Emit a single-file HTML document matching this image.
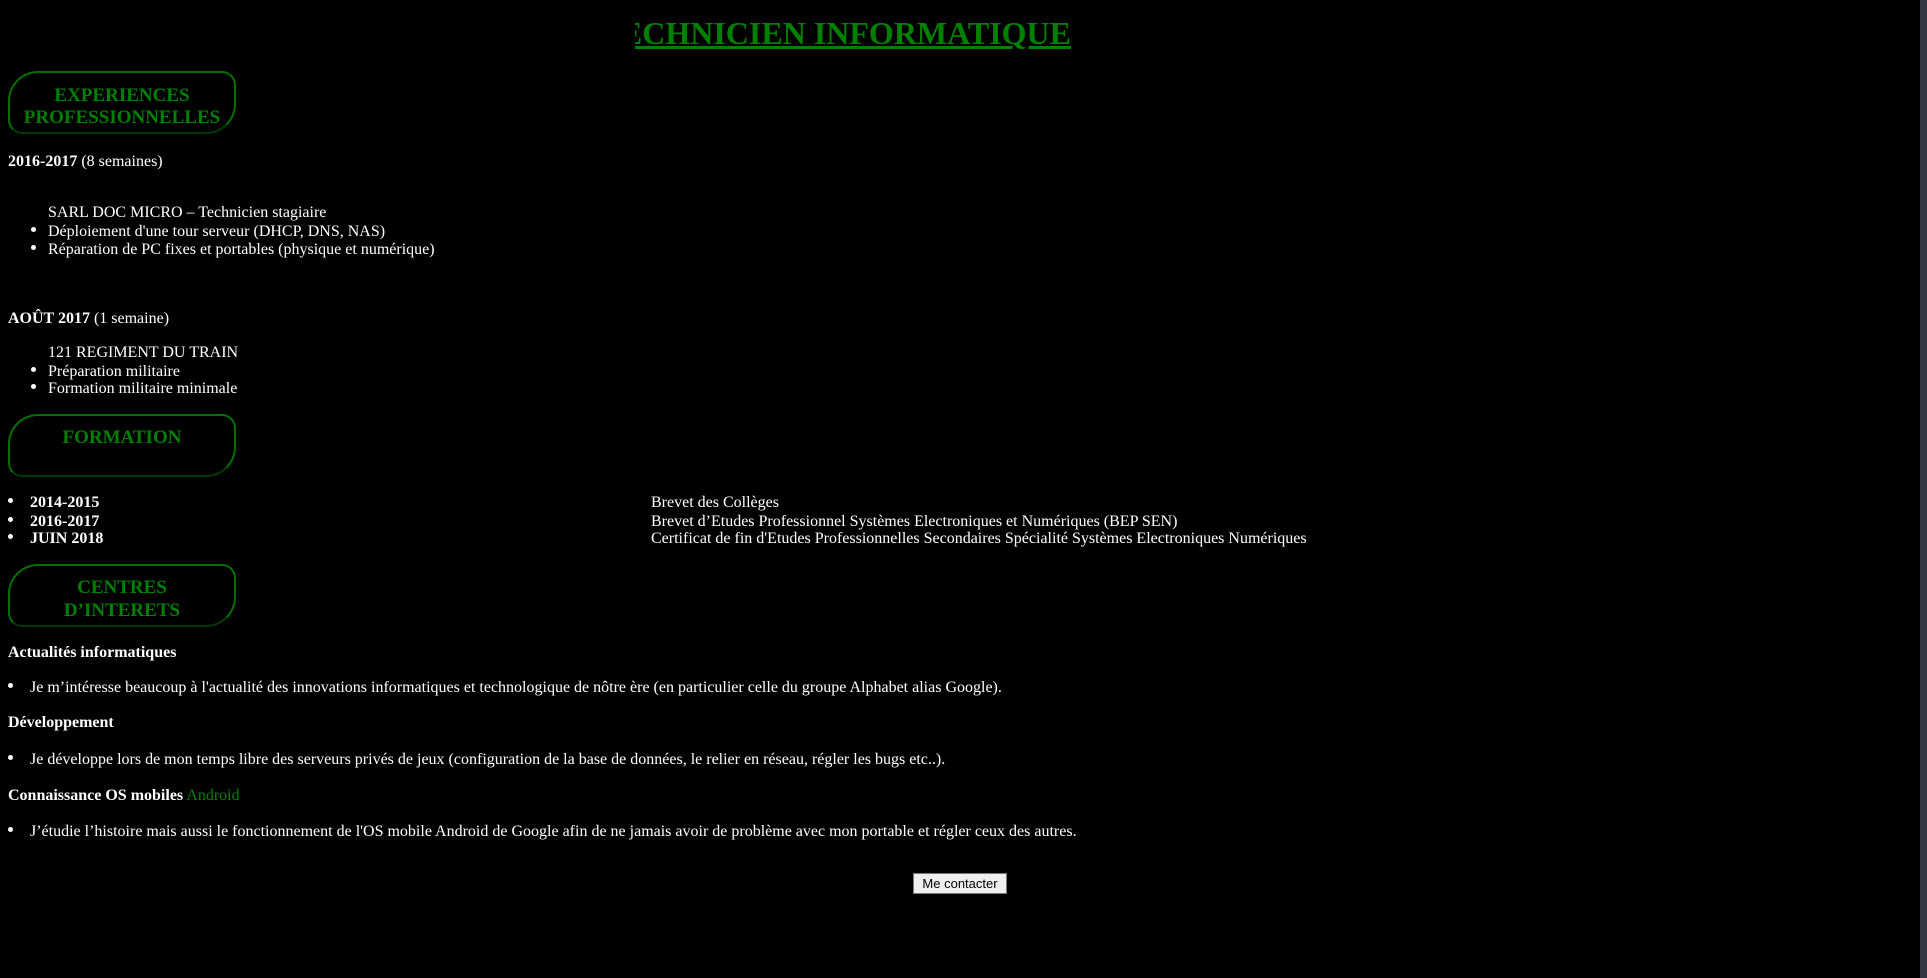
<!DOCTYPE html>
<html><head><meta charset="utf-8"><style>
body{margin:0;background:#000;width:1927px;height:978px;overflow:hidden;position:relative;font-family:"Liberation Serif",serif;font-size:16px;color:#fff}
.a{position:absolute;white-space:nowrap;line-height:18px;margin-top:2px}
.t{position:absolute;left:635px;top:12px;width:436px;overflow:hidden;height:44px}
.t span{position:absolute;right:0;top:0;font-size:32px;font-weight:bold;color:#008000;text-decoration:underline;white-space:nowrap;line-height:42px}
.box{position:absolute;left:8px;width:228px;border:2px solid #007000;border-bottom-color:#003a00;border-radius:30px 14px 30px 14px;color:#008000;font-weight:bold;font-size:19px;text-align:center;line-height:23px;box-sizing:border-box;height:63px}
.d{position:absolute;width:5px;height:5px;border-radius:50%;background:#fff;margin-top:1px}
b{font-weight:bold}
.sb{position:absolute;left:1920px;top:0;width:7px;height:978px;background:#34353e}
.btn{position:absolute;left:913px;top:873px;width:92px;height:19px;background:#efefef;border:1px solid #767676;color:#000;font-family:"Liberation Sans",sans-serif;font-size:13px;text-align:center;line-height:19px}
</style></head><body>
<div class="t"><span>TECHNICIEN INFORMATIQUE</span></div>
<div class="box" style="top:71px;padding-top:12px;line-height:22px">EXPERIENCES<br>PROFESSIONNELLES</div>
<div class="a" style="left:8px;top:151px"><b>2016-2017</b> (8 semaines)</div>
<div class="a" style="left:48px;top:202px">SARL DOC MICRO – Technicien stagiaire</div>
<div class="d" style="left:31px;top:226px"></div><div class="a" style="left:48px;top:221px">Déploiement d'une tour serveur (DHCP, DNS, NAS)</div>
<div class="d" style="left:31px;top:244px"></div><div class="a" style="left:48px;top:239px">Réparation de PC fixes et portables (physique et numérique)</div>
<div class="a" style="left:8px;top:308px"><b>AOÛT 2017</b> (1 semaine)</div>
<div class="a" style="left:48px;top:342px">121 REGIMENT DU TRAIN</div>
<div class="d" style="left:31px;top:366px"></div><div class="a" style="left:48px;top:361px">Préparation militaire</div>
<div class="d" style="left:31px;top:383px"></div><div class="a" style="left:48px;top:378px">Formation militaire minimale</div>
<div class="box" style="top:414px;padding-top:10px">FORMATION</div>
<div class="d" style="left:8px;top:497px"></div><div class="a" style="left:30px;top:492px"><b>2014-2015</b></div><div class="a" style="left:651px;top:492px">Brevet des Collèges</div>
<div class="d" style="left:8px;top:516px"></div><div class="a" style="left:30px;top:511px"><b>2016-2017</b></div><div class="a" style="left:651px;top:511px">Brevet d’Etudes Professionnel Systèmes Electroniques et Numériques (BEP SEN)</div>
<div class="d" style="left:8px;top:533px"></div><div class="a" style="left:30px;top:528px"><b>JUIN 2018</b></div><div class="a" style="left:651px;top:528px">Certificat de fin d'Etudes Professionnelles Secondaires Spécialité Systèmes Electroniques Numériques</div>
<div class="box" style="top:564px;padding-top:10px">CENTRES<br>D’INTERETS</div>
<div class="a" style="left:8px;top:642px"><b>Actualités informatiques</b></div>
<div class="d" style="left:8px;top:682px"></div><div class="a" style="left:30px;top:677px">Je m’intéresse beaucoup à l'actualité des innovations informatiques et technologique de nôtre ère (en particulier celle du groupe Alphabet alias Google).</div>
<div class="a" style="left:8px;top:712px"><b>Développement</b></div>
<div class="d" style="left:8px;top:754px"></div><div class="a" style="left:30px;top:749px">Je développe lors de mon temps libre des serveurs privés de jeux (configuration de la base de données, le relier en réseau, régler les bugs etc..).</div>
<div class="a" style="left:8px;top:785px"><b>Connaissance OS mobiles</b> <span style="color:#008000">Android</span></div>
<div class="d" style="left:8px;top:826px"></div><div class="a" style="left:30px;top:821px">J’étudie l’histoire mais aussi le fonctionnement de l'OS mobile Android de Google afin de ne jamais avoir de problème avec mon portable et régler ceux des autres.</div>
<div class="btn">Me contacter</div>
<div class="sb"></div>
</body></html>
